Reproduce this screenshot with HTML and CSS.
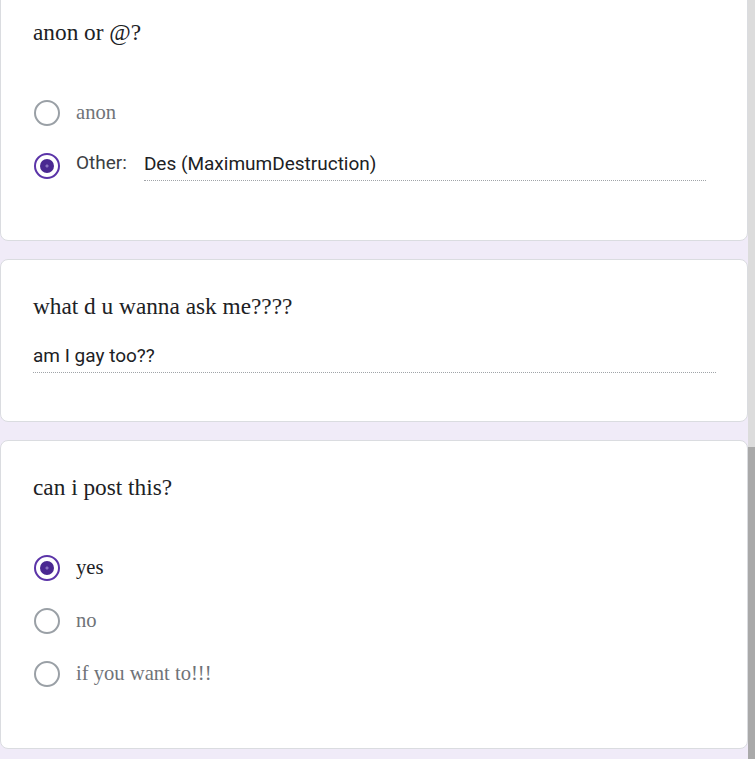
FILE: index.html
```
<!DOCTYPE html>
<html lang="en">
<head>
<meta charset="utf-8">
<title>Form</title>
<link rel="stylesheet" href="styles.css">
</head>
<body>
<div class="frame">
  <main class="page">
    <section class="card card-first">
      <div class="title">anon or @?</div>
      <div class="options">
        <div class="option">
          <span class="radio"></span>
          <span class="label">anon</span>
        </div>
        <div class="option">
          <span class="radio checked"></span>
          <span class="other-label">Other:</span>
          <span class="other-input">Des (MaximumDestruction)</span>
        </div>
      </div>
    </section>
    <section class="card">
      <div class="title">what d u wanna ask me????</div>
      <div class="answer">am I gay too??</div>
    </section>
    <section class="card">
      <div class="title">can i post this?</div>
      <div class="options">
        <div class="option">
          <span class="radio checked"></span>
          <span class="label selected">yes</span>
        </div>
        <div class="option">
          <span class="radio"></span>
          <span class="label">no</span>
        </div>
        <div class="option">
          <span class="radio"></span>
          <span class="label">if you want to!!!</span>
        </div>
      </div>
    </section>
  </main>
  <div class="scrollbar"><div class="thumb"></div></div>
</div>
</body>
</html>
```
FILE: styles.css
```
html, body {
  margin: 0;
  padding: 0;
  height: 100%;
  overflow: hidden;
}
body {
  background: #f0ebf8;
}
.frame {
  display: flex;
  height: 759px;
}
.page {
  flex: 1;
  display: flex;
  flex-direction: column;
  gap: 18px;
}
.card {
  background: #fff;
  border: 1px solid #dadce0;
  border-radius: 8px;
  padding: 31px 31px 48px 32px;
}
.card-first {
  margin-top: -15px;
}
.title {
  font-family: "Liberation Serif", serif;
  font-size: 23.3px;
  line-height: 30px;
  color: #202124;
}
.options {
  margin-top: 39px;
  display: flex;
  flex-direction: column;
}
.option {
  height: 53px;
  display: flex;
  align-items: center;
}
.radio {
  box-sizing: border-box;
  width: 26px;
  height: 26px;
  border-radius: 50%;
  border: 2px solid #9aa0a6;
  margin-left: 1px;
  margin-right: 16px;
  flex: none;
  position: relative;
}
.radio.checked {
  border-color: #5b34a8;
}
.radio.checked::after {
  content: "";
  position: absolute;
  left: 4px;
  top: 4px;
  width: 14px;
  height: 14px;
  border-radius: 50%;
  background: radial-gradient(circle, #8a73c0 0 1px, #4a2891 2px);
}
.label {
  font-family: "Liberation Serif", serif;
  font-size: 20.6px;
  color: #6f7378;
  line-height: 26px;
  margin-top: -2px;
}
.label.selected {
  color: #202124;
}
.other-label {
  font-family: Roboto, sans-serif;
  font-size: 19px;
  color: #3c4043;
  margin-right: 17px;
  margin-top: -6px;
}
.other-input {
  flex: 1;
  margin-right: 10px;
  font-family: Roboto, sans-serif;
  font-size: 19px;
  line-height: 24px;
  color: #202124;
  padding-bottom: 4px;
  border-bottom: 1px dotted #a0a4a8;
  margin-top: 2px;
}
.answer {
  margin-top: 23px;
  font-family: Roboto, sans-serif;
  font-size: 19px;
  line-height: 24px;
  color: #202124;
  padding-bottom: 4px;
  border-bottom: 1px dotted #a0a4a8;
}
.scrollbar {
  width: 7px;
  background: #dcdcdc;
  display: flex;
  flex-direction: column;
  justify-content: flex-end;
}
.thumb {
  height: 312px;
  background: #a9a9a9;
}
```
